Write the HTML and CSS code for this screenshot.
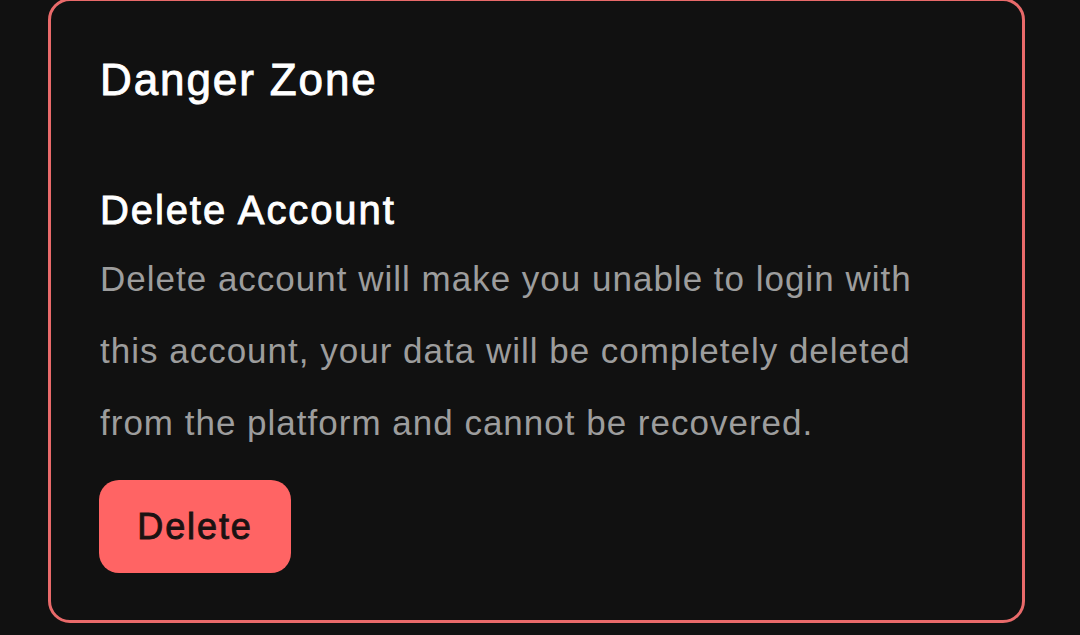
FILE: index.html
```html
<!DOCTYPE html>
<html lang="en">
<head>
<meta charset="utf-8">
<title>Danger Zone</title>
<link rel="stylesheet" href="styles.css">
</head>
<body>
  <section class="card">
    <h2 class="card-title">Danger Zone</h2>
    <div class="item">
      <h3 class="item-title">Delete Account</h3>
      <p class="item-desc">Delete account will make you unable to login with this account, your data will be completely deleted from the platform and cannot be recovered.</p>
      <button class="btn-danger" type="button">Delete</button>
    </div>
  </section>
</body>
</html>
```

FILE: styles.css
```css
html, body {
  margin: 0;
  padding: 0;
  background: #111111;
}
body {
  font-family: "Liberation Sans", Arial, sans-serif;
  overflow: hidden;
}
.card {
  box-sizing: border-box;
  width: 977px;
  height: 625px;
  margin: -2px 0 0 48px;
  border: 3px solid #e96a6a;
  border-radius: 22px;
  padding: 53px 49px 0 49px;
  display: flex;
  flex-direction: column;
}
.card-title {
  margin: 0;
  font-size: 44px;
  line-height: 52px;
  font-weight: 400;
  color: #ffffff;
  letter-spacing: 1.9px;
  -webkit-text-stroke: 0.9px #ffffff;
}
.item {
  margin-top: 80px;
  display: flex;
  flex-direction: column;
  align-items: flex-start;
}
.item-title {
  margin: 0;
  font-size: 40px;
  line-height: 48px;
  font-weight: 400;
  color: #ffffff;
  letter-spacing: 1.9px;
  -webkit-text-stroke: 0.9px #ffffff;
}
.item-desc {
  margin: 9px 0 0 0;
  width: 840px;
  font-size: 35px;
  line-height: 72px;
  font-weight: 400;
  color: #9d9d9d;
  letter-spacing: 1px;
}
.btn-danger {
  margin-top: 21px;
  margin-left: -1px;
  width: 192px;
  height: 93px;
  border: none;
  border-radius: 20px;
  background: #ff6464;
  color: #1b1212;
  font-family: inherit;
  font-size: 36px;
  font-weight: 400;
  letter-spacing: 1.9px;
  -webkit-text-stroke: 0.9px #1b1212;
  padding: 0;
}
```
